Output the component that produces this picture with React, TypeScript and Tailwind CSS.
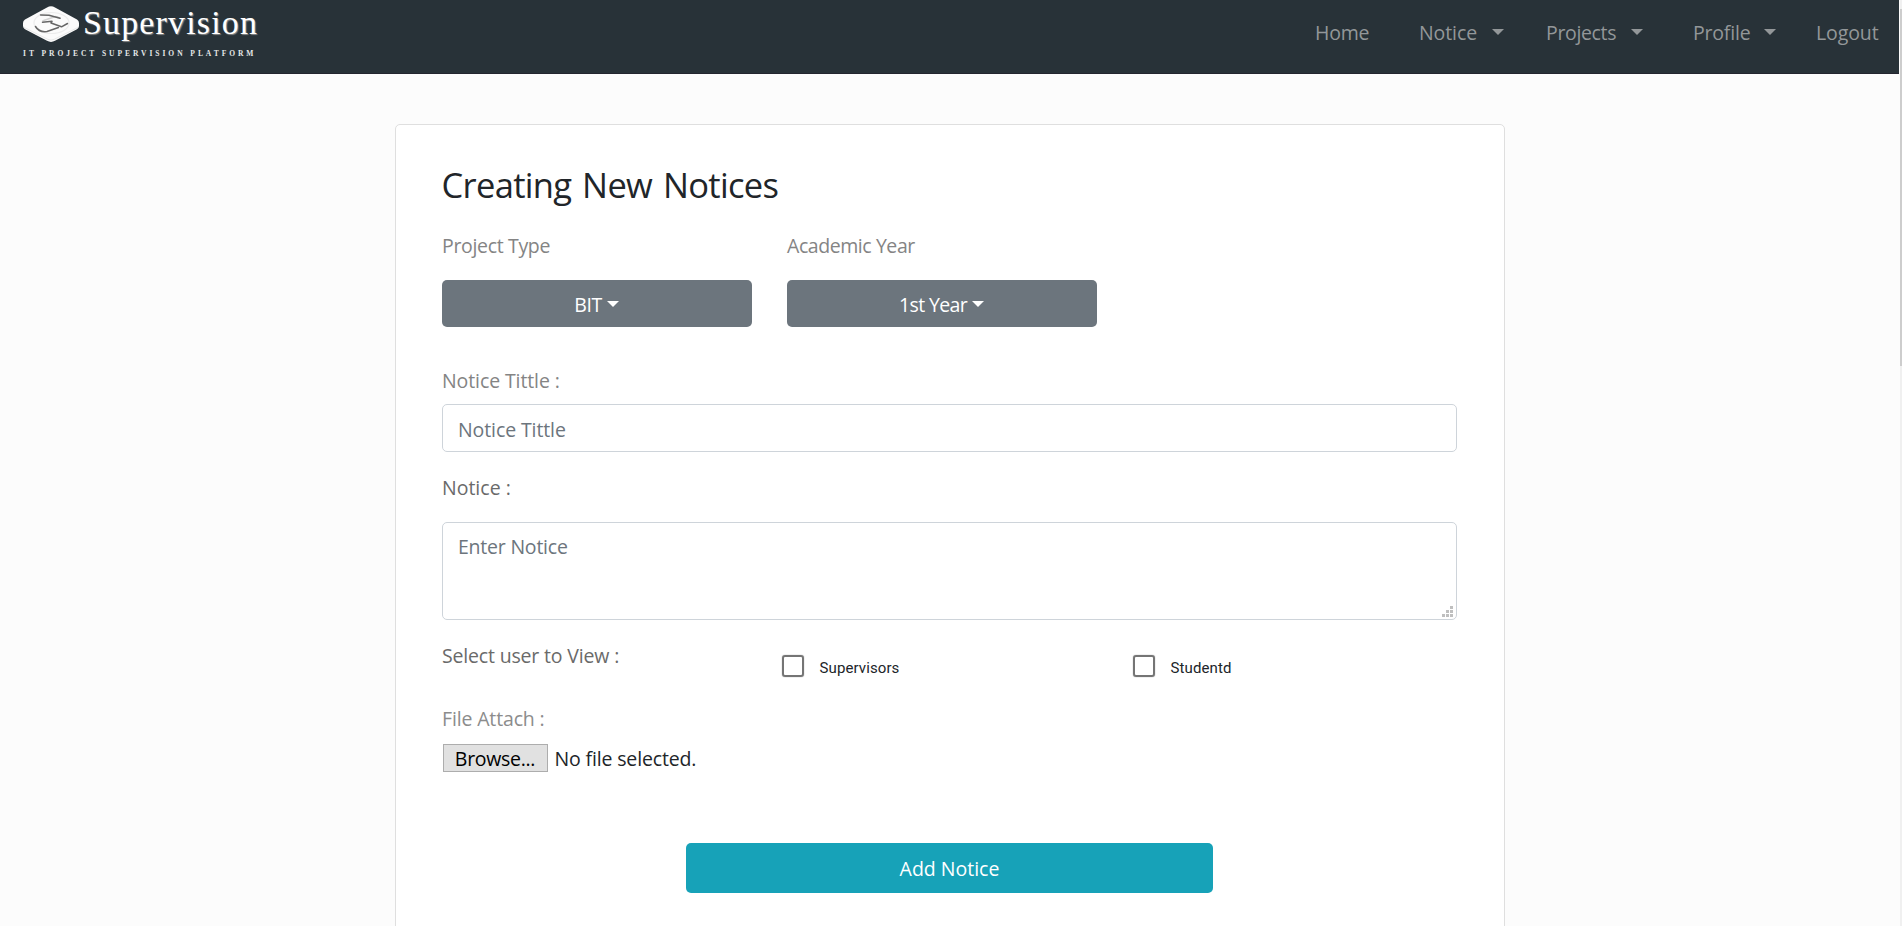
import React from "react";

function Caret({ className = "" }: { className?: string }) {
  return (
    <svg className={"h-1.5 w-3 shrink-0 " + className} viewBox="0 0 12 6" fill="currentColor" aria-hidden="true">
      <path d="M0 0h12L6 6z" />
    </svg>
  );
}

function Logo() {
  return (
    <a href="#" className="flex w-[260px] flex-col pl-[23px] pt-1.5 text-white">
      <span className="flex h-9 items-start">
        <svg className="h-9 w-14 shrink-0" viewBox="0 0 56 36" aria-hidden="true">
          <path
            d="M24 1.4Q28 -.8 32 1.4L54 13.6Q56 14.8 56 17V20Q56 22 54 23.2L32 34.8Q28 37 24 34.8L2 23.2Q0 22 0 20V17Q0 14.8 2 13.6Z"
            fill="#fbfbfb"
          />
          <path d="M1 21.4L24.5 33.2Q28 35 31.5 33.2L55 21.4" fill="none" stroke="#e8e8e8" strokeWidth="1" />
          <ellipse cx="28.5" cy="17" rx="17.5" ry="10.5" fill="none" stroke="#ececec" strokeWidth="1.2" />
          <g fill="none" stroke="#666" strokeWidth="1.5" strokeLinecap="round" strokeLinejoin="round">
            <path d="M37 12.2Q33 9.8 31 11L20 14.8" stroke="#d2d2d2" />
            <path d="M17.5 8.9L26 9.2L37 12.2" />
            <path d="M19.5 16.2L29 15.3L28 17L38.5 20.8L44.5 17.5" />
            <path d="M12.5 20.5Q16 26.5 24 25.5L35.5 21.5" />
          </g>
        </svg>
        <span className="ml-[4px] mt-[-3px] whitespace-nowrap font-['Liberation_Serif',serif] text-[34px] leading-[40px] tracking-[1.15px] [text-shadow:1px_1px_1px_#8a8a8a]">
          Supervision
        </span>
      </span>
      <span className="mt-[7px] whitespace-nowrap font-['Liberation_Serif',serif] text-[7.5px] font-bold leading-[10px] tracking-[2.96px] text-[#e6e8e9]">
        IT PROJECT SUPERVISION PLATFORM
      </span>
    </a>
  );
}

function NavBar() {
  return (
    <header className="flex h-[74px] justify-between border-b border-[#23252f] bg-[#283238]">
      <Logo />
      <nav className="flex h-[30px] translate-y-[18px] whitespace-nowrap leading-[30px] text-[#939799]">
        <a href="#" className="w-[104px] tracking-[-0.2px]">Home</a>
        <a href="#" className="flex w-[127px] items-center">
          <span className="w-[73px] tracking-[-0.1px]">Notice</span>
          <Caret className="-mt-0.5" />
        </a>
        <a href="#" className="flex w-[147px] items-center">
          <span className="w-[85px] tracking-[-0.35px]">Projects</span>
          <Caret className="-mt-0.5" />
        </a>
        <a href="#" className="flex w-[123px] items-center">
          <span className="w-[71px] tracking-[-0.2px]">Profile</span>
          <Caret className="-mt-0.5" />
        </a>
        <a href="#" className="w-[83px] tracking-[-0.1px]">Logout</a>
      </nav>
    </header>
  );
}

function Dropdown({ label, value, labelClass, valueClass }: { label: string; value: string; labelClass: string; valueClass: string }) {
  return (
    <div className="w-[310px]">
      <div className={"pl-[0.5px] text-[#848484] " + labelClass}>{label}</div>
      <button className="mt-[19px] flex h-[47px] w-full items-center justify-center gap-[5px] rounded-[5px] bg-[#6c757d] text-white">
        <span className={"pt-0.5 " + valueClass}>{value}</span>
        <Caret />
      </button>
    </div>
  );
}

function CheckOption({ label }: { label: string }) {
  return (
    <label className="flex w-[351px] shrink-0 items-start">
      <span className="h-[22px] w-[22px] rounded-[3px] border-2 border-[#757575] shadow-[0_0_1px_#757575]" />
      <span className="ml-4 mt-[3px] font-['Roboto',sans-serif] text-[15px] leading-5 tracking-[0.1px] text-[#212529]">{label}</span>
    </label>
  );
}

function NoticeForm() {
  return (
    <form className="h-[1100px] w-[1110px] rounded-[5px] border border-[#dfdfdf] bg-white pl-[46px] pr-[47px] pt-[38px]">
      <h2 className="h-[42px] whitespace-nowrap pt-px text-[34.5px] leading-[42px] tracking-[-0.68px] text-[#212529] [word-spacing:2.5px]">
        Creating New Notices
      </h2>
      <div className="mt-[26px] flex gap-[35px]">
        <Dropdown label="Project Type" value="BIT" labelClass="tracking-[-0.33px]" valueClass="tracking-[-0.5px]" />
        <Dropdown label="Academic Year" value="1st Year" labelClass="tracking-[-0.43px]" valueClass="tracking-[-0.65px]" />
      </div>
      <label className="mt-[39px] block pl-[0.5px] tracking-[-0.1px] text-[#848484]">Notice Tittle :</label>
      <input
        className="mt-2 block h-12 w-full rounded-[5px] border border-[#ced4da] px-[15.5px] pt-[3px] tracking-[-0.1px] outline-none placeholder:text-[#6c757d] placeholder:opacity-100"
        placeholder="Notice Tittle"
      />
      <label className="mt-[21px] block pl-[0.5px] text-[#6a6a6a]">Notice :</label>
      <div className="relative mt-[19px] h-[98px]">
        <textarea
          className="block h-[98px] w-full resize-none rounded-[5px] border border-[#ced4da] px-[15.5px] pt-[9px] tracking-[-0.22px] outline-none placeholder:text-[#6c757d] placeholder:opacity-100"
          placeholder="Enter Notice"
        />
        <svg className="pointer-events-none absolute bottom-[3px] right-1 h-[11px] w-[11px]" viewBox="0 0 11 11" fill="#bfbfbf" aria-hidden="true">
          <path d="M8 0h3v3H8zM4 4h3v3H4zM8 4h3v3H8zM0 8h3v3H0zM4 8h3v3H4zM8 8h3v3H8z" />
        </svg>
      </div>
      <div className="mt-[21px] flex h-[63px] items-start">
        <span className="w-[340px] shrink-0 pl-[0.5px] tracking-[-0.17px] text-[#6a6a6a]">Select user to View :</span>
        <div className="mt-[14px] flex">
          <CheckOption label="Supervisors" />
          <CheckOption label="Studentd" />
        </div>
      </div>
      <label className="block pl-[0.5px] tracking-[-0.15px] text-[#8c8c8c]">File Attach :</label>
      <div className="ml-px mt-[10px] flex h-7 items-center">
        <button type="button" className="h-7 w-[105px] border border-[#adadad] bg-[#e1e1e1] pt-px leading-[26px] tracking-[-0.3px] text-black">
          Browse...
        </button>
        <span className="ml-[7px] pt-0.5 tracking-[-0.15px] text-[#212529]">No file selected.</span>
      </div>
      <button type="button" className="mx-auto mt-[71px] block h-[50px] w-[527px] rounded-[5px] bg-[#17a2b8] pl-px pt-0.5 text-white">
        Add Notice
      </button>
    </form>
  );
}

export default function App() {
  return (
    <div className="flex h-[926px] overflow-hidden bg-[#fcfcfc] font-['Open_Sans',sans-serif] text-[19.5px] leading-[30px]">
      <div className="w-[1899px]">
        <NavBar />
        <main className="flex justify-center pt-[50px]">
          <NoticeForm />
        </main>
      </div>
      <div className="ml-px w-0.5 bg-[#f0f0f0] pt-[9px]">
        <div className="h-[357px] bg-[#cdcdcd]" />
      </div>
    </div>
  );
}
